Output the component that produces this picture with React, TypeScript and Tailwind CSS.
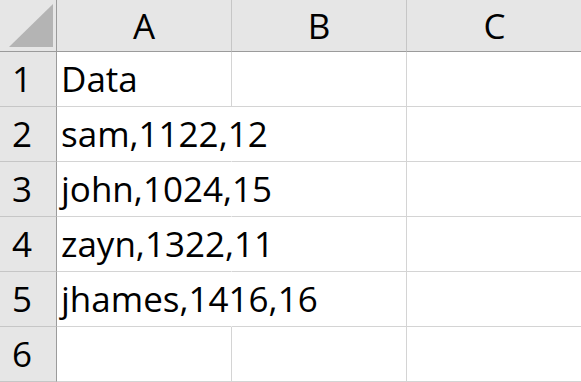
const columns = ["A", "B", "C"];

const rows: string[] = [
  "Data",
  "sam,1122,12",
  "john,1024,15",
  "zayn,1322,11",
  "jhames,1416,16",
  "",
];

function CornerCell() {
  return (
    <div className="relative h-[52px] w-[57px] shrink-0 border-r border-b border-r-[#9b9b9b] border-b-[#9b9b9b] bg-[#e6e6e6]">
      <svg
        className="absolute left-[9px] top-[4px]"
        width="45"
        height="44"
        viewBox="0 0 45 44"
      >
        <polygon points="0,43 44,43 44,0" fill="#b4b4b4" />
      </svg>
    </div>
  );
}

export default function App() {
  return (
    <div
      className="h-[382px] w-[581px] overflow-hidden bg-white text-[35px] text-black"
      style={{ fontFamily: '"Open Sans", "Liberation Sans", sans-serif' }}
    >
      <div className="flex">
        <CornerCell />
        {columns.map((col, i) => (
          <div
            key={col}
            className={`h-[52px] w-[175px] shrink-0 border-b border-b-[#9b9b9b] bg-[#e6e6e6] text-center leading-[51px] ${
              i < columns.length - 1 ? "border-r border-r-[#c6c6c6]" : ""
            }`}
          >
            {col}
          </div>
        ))}
      </div>

      {rows.map((value, r) => {
        const overflows = value.length > 8;
        return (
          <div key={r} className="flex h-[55px]">
            <div className="w-[57px] shrink-0 border-r border-b border-r-[#9b9b9b] border-b-[#c6c6c6] bg-[#e6e6e6] pr-[12px] text-center leading-[54px]">
              {r + 1}
            </div>
            <div
              className={`w-[175px] shrink-0 whitespace-nowrap border-r border-b border-b-[#d4d4d4] pl-[4px] leading-[54px] ${
                overflows ? "border-r-transparent" : "border-r-[#d4d4d4]"
              }`}
            >
              {value}
            </div>
            <div className="w-[175px] shrink-0 border-r border-b border-[#d4d4d4]" />
            <div className="w-[175px] shrink-0 border-b border-[#d4d4d4]" />
          </div>
        );
      })}
    </div>
  );
}
